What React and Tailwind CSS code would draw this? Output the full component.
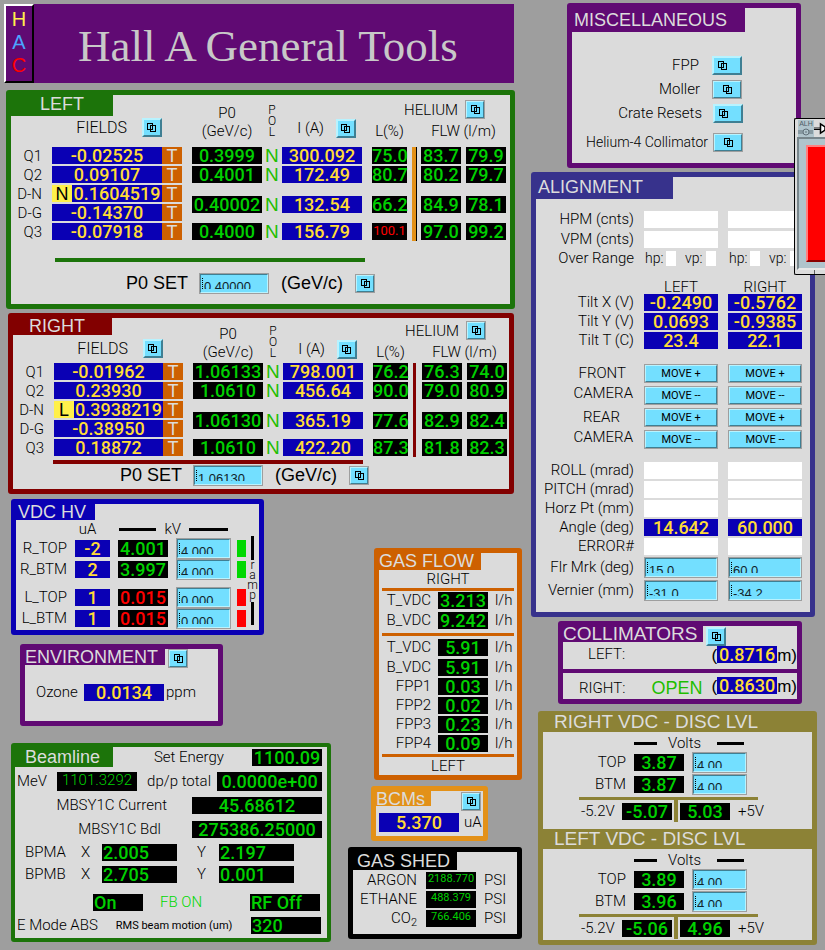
import React from "react";

const SANS = "font-['Liberation_Sans',Arial,sans-serif]";
const LABEL = "font-['Roboto',sans-serif] font-light text-black whitespace-nowrap";

/* ---------- small parts ---------- */

function RelatedIcon() {
  return (
    <svg width="9" height="9" viewBox="0 0 9 9" fill="none" stroke="#000" strokeWidth="1" shapeRendering="crispEdges" aria-hidden="true">
      <rect x="0.5" y="0.5" width="5" height="6" />
      <path d="M5.5 2.5H8.5V8.5H3.5V6.5M5.5 2.5H3.5V6.5" />
    </svg>
  );
}

const BEVEL =
  "border-2 border-t-[#b8f3ff] border-l-[#b8f3ff] border-r-[#3f7f93] border-b-[#3f7f93] bg-[#73dfff] text-black";

function RelatedButton({ label, wide, start, outlined }) {
  return (
    <button
      type="button"
      aria-label={label}
      className={`${BEVEL} flex shrink-0 items-center ${start ? "justify-start pl-1" : "justify-center"} ${
        wide ? "h-[19px] w-[30px]" : "h-[19px] w-5"
      } ${outlined ? "outline outline-1 -outline-offset-1 outline-[#9e9e9e]" : ""}`}
    >
      <RelatedIcon />
    </button>
  );
}

function Title({ children, size = "text-[18px]", className = "" }) {
  return <h2 className={`${SANS} whitespace-nowrap text-[#dcdcdc] ${size} ${className}`}>{children}</h2>;
}

function Panel({ className = "", children }) {
  return <section className={`rounded-[3px] border-[5px] bg-[#dbdbdb] ${className}`}>{children}</section>;
}

const VALUE = "block h-[17px] whitespace-nowrap font-['Roboto',sans-serif] font-medium text-[18px] leading-[18px]";

function Value({ tone = "blue", className = "text-center", children }) {
  const tones = {
    blue: "bg-[#0a00b4] text-[#ffdc37]",
    green: "bg-black text-[#00d000]",
    red: "bg-black text-[#ff0000]",
    white: "bg-white",
  };
  return <output className={`${VALUE} ${tones[tone]} ${className}`}>{children}</output>;
}

function Entry({ label, value, className = "" }) {
  return (
    <span
      className={`relative block h-[21px] shrink-0 border-2 border-b-[#b8f3ff] border-l-[#3f7f93] border-r-[#b8f3ff] border-t-[#3f7f93] bg-[#73dfff] outline outline-1 -outline-offset-1 outline-[#9e9e9e] ${className}`}
    >
      <span className="block h-[14px] overflow-hidden pt-[2px]">
        <input
          aria-label={label}
          defaultValue={value}
          className={`${SANS} block h-5 w-full bg-transparent pl-[3px] text-[13px] leading-5 text-[#10242b] outline-none`}
        />
      </span>
      <i className="absolute left-px top-[3px] h-[11px] border-l border-dotted border-black" />
    </span>
  );
}

/* ---------- spectrometer arm ---------- */

const ARM_ROWS = ["Q1", "Q2", "D-N", "D-G", "Q3"];

function Arm({ name, panel, tab, body, head, th, bar, rule, setRow, data }) {
  return (
    <Panel className={panel}>
      <Title className={tab}>{name}</Title>
      <div className={body}>
        <table className={`${head} w-full table-fixed border-separate border-spacing-0`}>
          <colgroup>
            <col className="w-[41px]" />
            <col />
            <col className="w-5" />
            <col className="w-20" />
            <col className="w-5" />
            <col className="w-20" />
            <col className="w-[45px]" />
            <col className="w-[14px]" />
            <col className="w-10" />
            <col className="w-[45px]" />
          </colgroup>
          <thead>
            <tr className="align-bottom">
              <th className={th} />
              <th scope="col" className={`${LABEL} ${th} text-[16px] leading-[19px]`}>
                <div className="flex items-center justify-end gap-[15px] pb-[3px]">
                  FIELDS
                  <RelatedButton label={`${name} fields`} />
                </div>
              </th>
              <th className={th} />
              <th scope="col" className={`${LABEL} ${th} pl-[10px] text-[15px] leading-[18px]`}>
                P0
                <br />
                (GeV/c)
              </th>
              <th scope="col" className={`${LABEL} ${th} text-[12px] leading-[11px]`}>
                <div className="pb-[2px]">
                  P<br />O<br />L
                </div>
              </th>
              <th scope="col" className={`${LABEL} ${th} text-[15px] leading-[19px]`}>
                <div className="flex items-center justify-end gap-3 pb-[2px] pr-1.5">
                  I (A)
                  <RelatedButton label={`${name} currents`} />
                </div>
              </th>
              <th scope="colgroup" colSpan={4} className={`${LABEL} ${th} text-[15px] leading-[18px]`}>
                <div className="flex items-center justify-end gap-[7px] pb-[3px] pr-[21px]">
                  HELIUM
                  <RelatedButton label={`${name} helium`} outlined />
                </div>
                <div className="flex pl-[10px]">
                  <span className="w-[35px]">L(%)</span>
                  <span className="grow pl-[14px]">FLW (l/m)</span>
                </div>
              </th>
            </tr>
          </thead>
          <tbody>
            {ARM_ROWS.map((row, i) => {
              const grp = data.groups[i];
              const span = i === 2 ? 2 : 1;
              const cell = span === 2 ? "align-middle" : "align-top";
              return (
                <tr key={row} className="h-[19px]">
                  <th scope="row" className={`${LABEL} pr-[10px] text-right align-top text-[15px] leading-[18px]`}>{row}</th>
                  <td className="align-top">
                    {i === 2 ? (
                      <div className="flex">
                        <b className={`${SANS} h-[17px] w-5 bg-[#fff04b] text-center text-[18px] font-normal leading-[18px]`}>
                          {data.flag}
                        </b>
                        <Value className="grow text-center">{data.fields[i]}</Value>
                      </div>
                    ) : (
                      <Value>{data.fields[i]}</Value>
                    )}
                  </td>
                  <td className="align-top">
                    <span className={`${SANS} block h-[17px] bg-[#cd6000] text-center text-[18px] leading-[18px] text-[#dcdcdc]`}>T</span>
                  </td>
                  {grp && (
                    <>
                      <td rowSpan={span} className={`${cell} pl-[10px]`}>
                        <Value tone="green">{grp[0]}</Value>
                      </td>
                      <td rowSpan={span} className={cell}>
                        <span className={`${SANS} block h-[17px] text-center text-[19px] leading-[18px] text-[#1fbe00]`}>N</span>
                      </td>
                      <td rowSpan={span} className={cell}>
                        <Value>{grp[1]}</Value>
                      </td>
                      <td rowSpan={span} className={`${cell} pl-[10px]`}>
                        {grp[5] ? (
                          <output className="block h-[17px] bg-black text-center font-['Roboto',sans-serif] text-[13px] font-normal leading-[15px] text-[#ff0000]">
                            {grp[2]}
                          </output>
                        ) : (
                          <Value tone="green">{grp[2]}</Value>
                        )}
                      </td>
                    </>
                  )}
                  {i === 0 && (
                    <td rowSpan={5} className="pl-[5px] align-top">
                      <div className={`h-[94px] ${bar}`} />
                    </td>
                  )}
                  {grp && (
                    <>
                      <td rowSpan={span} className={cell}>
                        <Value tone="green">{grp[3]}</Value>
                      </td>
                      <td rowSpan={span} className={`${cell} pl-[5px]`}>
                        <Value tone="green">{grp[4]}</Value>
                      </td>
                    </>
                  )}
                </tr>
              );
            })}
          </tbody>
        </table>
      </div>
      <div className={`h-1 ${rule}`} />
      <div className={`${SANS} flex items-center text-[18px] leading-[21px] ${setRow}`}>
        <span className="whitespace-nowrap">P0 SET</span>
        <Entry label={`${name} P0 set`} value={data.set} className="ml-[11px] w-[70px]" />
        <span className="ml-3 mr-3">(GeV/c)</span>
        <RelatedButton label={`${name} P0 set tools`} outlined />
      </div>
    </Panel>
  );
}

/* ---------- VDC HV ---------- */

function HvRow({ name, ua, kv, set, ok, className = "" }) {
  return (
    <div className={`flex items-center ${className}`}>
      <span className={`${LABEL} grow pr-2 text-right text-[15px] leading-[17px]`}>{name}</span>
      <Value className="w-[35px] text-center">{ua}</Value>
      <Value tone={ok ? "green" : "red"} className="ml-2 w-[50px] text-center">{kv}</Value>
      <Entry label={`${name} set`} value={set} className="ml-2 w-[55px]" />
      <span className={`ml-[6px] h-[17px] w-[9px] ${ok ? "bg-[#00d800]" : "bg-[#ff0000]"}`} />
    </div>
  );
}

function VdcHv() {
  return (
    <Panel className="ml-[11px] mr-[78px] mt-[5px] border-[#0a00b4] pb-px">
      <Title className="h-4 w-[79px] bg-[#0a00b4] pl-[2px] leading-[17px]">VDC HV</Title>
      <div className="flex">
        <div className="grow">
          <div className={`${LABEL} flex h-[18px] items-center pr-[18px] text-[15px] leading-5`}>
            <span className="grow pr-[23px] text-right">uA</span>
            <i className="h-[3px] w-[37px] bg-black" />
            <span className="px-2">kV</span>
            <i className="h-[3px] w-[39px] bg-black" />
          </div>
          <HvRow name="R_TOP" ua="-2" kv="4.001" set="4.000" ok />
          <HvRow name="R_BTM" ua="2" kv="3.997" set="4.000" ok />
          <HvRow name="L_TOP" ua="1" kv="0.015" set="0.000" className="mt-[7px]" />
          <HvRow name="L_BTM" ua="1" kv="0.015" set="0.000" />
        </div>
        <div className={`${LABEL} flex w-[13px] flex-col items-center pb-1 pt-4 text-center text-[12px] leading-[10px]`}>
          <i className="w-[3px] grow bg-black" />
          <span className="pb-0.5">
            r<br />a<br />m<br />p
          </span>
          <i className="w-[3px] grow bg-black" />
        </div>
      </div>
    </Panel>
  );
}

function Environment() {
  return (
    <Panel className="ml-5 mr-[119px] mt-[9px] border-[#600a73] pb-5">
      <div className="flex">
        <Title className="h-4 w-[140px] bg-[#600a73] leading-[17px]">ENVIRONMENT</Title>
        <div className="ml-[3px] h-[19px]">
          <RelatedButton label="Environment" outlined />
        </div>
      </div>
      <div className={`${LABEL} mt-4 flex items-center pl-[11px] text-[15px] leading-[17px]`}>
        <span className="w-12">Ozone</span>
        <Value className="w-20 text-center">0.0134</Value>
        <span className="ml-[2px]">ppm</span>
      </div>
    </Panel>
  );
}

/* ---------- Beamline ---------- */

function Beamline() {
  const text = `${LABEL} text-[15px] leading-[17px]`;
  return (
    <section className="ml-[11px] mr-[11px] mt-[17px] rounded-[3px] border-4 border-[#1c740a] bg-[#dbdbdb] pb-1">
      <div className="flex">
        <Title className="h-5 w-[98px] bg-[#1c740a] pl-[10px] leading-[20px]">Beamline</Title>
        <div className={`${text} flex grow items-center justify-end pr-[5px] pt-px`}>
          <span className="mr-7">Set Energy</span>
          <Value tone="green" className="w-[70px] text-center">1100.09</Value>
        </div>
      </div>
      <div className={`${text} mt-[5px] flex items-center pl-[2px] pr-[5px]`}>
        <span>MeV</span>
        <output className="ml-[10px] h-[19px] w-20 bg-black text-center text-[15px] font-light leading-[17px] text-[#00d000]">
          1101.3292
        </output>
        <span className="grow pr-[6px] text-right">dp/p total</span>
        <Value tone="green" className="h-[19px]! w-[105px] text-center leading-[20px]!">0.0000e+00</Value>
      </div>
      <div className={`${text} mt-[6px] flex items-center pr-[5px]`}>
        <span className="grow pr-[25px] text-right">MBSY1C Current</span>
        <Value tone="green" className="w-[130px] text-center">45.68612</Value>
      </div>
      <div className={`${text} mt-[7px] flex items-center pr-[5px]`}>
        <span className="grow pr-[31px] text-right">MBSY1C Bdl</span>
        <Value tone="green" className="w-[130px] text-center">275386.25000</Value>
      </div>
      <div className="mt-[6px] flex flex-col gap-[5px]">
        {[
          ["BPMA", "2.005", "2.197"],
          ["BPMB", "2.705", "0.001"],
        ].map(([n, x, y]) => (
          <div key={n} className={`${text} flex items-center pl-[10px]`}>
            <span className="w-14">{n}</span>
            <span className="w-[21px]">X</span>
            <Value tone="green" className="w-[75px] pl-px">{x}</Value>
            <span className="w-[42px] pl-5">Y</span>
            <Value tone="green" className="w-[75px] pl-px">{y}</Value>
          </div>
        ))}
      </div>
      <div className={`${text} mt-[11px] flex items-center pl-[78px] pr-[7px]`}>
        <Value tone="green" className="w-[50px] pl-px">On</Value>
        <span className="ml-[17px] grow text-[#00d800]!">FB ON</span>
        <Value tone="green" className="w-[70px] pl-px">RF Off</Value>
      </div>
      <div className={`${text} mt-[6px] flex items-center pl-[2px] pr-[6px]`}>
        <span>E Mode ABS</span>
        <span className="ml-[18px] grow text-[11px] font-normal">RMS beam motion (um)</span>
        <Value tone="green" className="w-[70px] pl-px">320</Value>
      </div>
    </section>
  );
}

/* ---------- Gas ---------- */

function GasRow({ name, value, className = "" }) {
  return (
    <div className={`${LABEL} flex items-center text-[15px] leading-[17px] ${className}`}>
      <span className="grow pr-[7px] text-right">{name}</span>
      <Value tone="green" className="w-[50px] text-center">{value}</Value>
      <span className="w-[29px] pl-[7px]">l/h</span>
    </div>
  );
}

function GasFlow() {
  return (
    <Panel className="mt-[54px] border-[#cd6000]">
      <Title className="h-[17px] w-[102px] bg-[#cd6000] leading-[17px]">GAS FLOW</Title>
      <p className={`${LABEL} text-center text-[15px] leading-[18px]`}>RIGHT</p>
      <div className="mx-[3px] h-[3px] bg-[#cd6000]" />
      <GasRow name="T_VDC" value="3.213" className="mt-px" />
      <GasRow name="B_VDC" value="9.242" className="mt-[3px]" />
      <div className="mx-[3px] mt-1 h-[3px] bg-[#cd6000]" />
      <GasRow name="T_VDC" value="5.91" className="mt-[3px]" />
      <GasRow name="B_VDC" value="5.91" className="mt-[3px]" />
      <GasRow name="FPP1" value="0.03" className="mt-[2px]" />
      <GasRow name="FPP2" value="0.02" className="mt-[2px]" />
      <GasRow name="FPP3" value="0.23" className="mt-[2px]" />
      <GasRow name="FPP4" value="0.09" className="mt-[2px]" />
      <div className="mx-[3px] mt-[2px] h-[3px] bg-[#cd6000]" />
      <p className={`${LABEL} text-center text-[15px] leading-[18px]`}>LEFT</p>
    </Panel>
  );
}

function Bcms() {
  return (
    <Panel className="-ml-[3px] mr-[34px] mt-[6px] border-[#e39118] pb-1">
      <div className="flex h-[22px] justify-between pr-[2px]">
        <Title className="h-[15px] w-[55px] bg-[#e39118] leading-[16px]">BCMs</Title>
        <div className="pt-px">
          <RelatedButton label="BCMs" outlined />
        </div>
      </div>
      <div className={`${LABEL} flex items-center pl-[3px] text-[15px] leading-[19px]`}>
        <Value className="h-[19px]! w-20 text-center leading-[20px]!">5.370</Value>
        <span className="ml-[5px]">uA</span>
      </div>
    </Panel>
  );
}

function GasShed() {
  return (
    <Panel className="-ml-[26px] mt-[6px] border-black pb-[7px]">
      <Title className="h-[18px] w-[104px] bg-black pl-1 leading-[19px]">GAS SHED</Title>
      <div className="mt-[2px] flex flex-col gap-[2px]">
        {[
          ["ARGON", "2188.770"],
          ["ETHANE", "488.379"],
          ["CO₂", "766.406"],
        ].map(([n, v]) => (
          <div key={n} className={`${LABEL} flex h-[17px] items-center text-[15px] leading-[17px]`}>
            <span className="grow pr-[9px] text-right">
              {n === "CO₂" ? (
                <>
                  CO<sub className="text-[11px] leading-none">2</sub>
                </>
              ) : (
                n
              )}
            </span>
            <output className="h-[17px] w-[50px] bg-black text-center text-[11px] font-normal leading-[13px] text-[#00d000]">{v}</output>
            <span className="w-[41px] pl-2">PSI</span>
          </div>
        ))}
      </div>
    </Panel>
  );
}

/* ---------- right side ---------- */

function Misc() {
  const rows = [
    ["FPP", true, "pr-[54px]", "pl-[13px]"],
    ["Moller", false, "pr-[54px]", "pl-3"],
    ["Crate Resets", true, "pr-[53px]", "pl-[11px]"],
    ["Helium-4 Collimator", false, "pr-[53px]", "pl-[5px]"],
  ];
  return (
    <Panel className="ml-9 mr-6 border-[#600a73] pb-[11px]">
      <Title className="h-6 w-[173px] bg-[#600a73] pl-[2px] leading-6">MISCELLANEOUS</Title>
      <div className="mt-6 flex flex-col gap-[5px]">
        {rows.map(([n, start, pr, pl], i) => (
          <div
            key={n}
            className={`${LABEL} flex items-center justify-end leading-[19px] ${pr} ${i === 3 ? "mt-[5px] text-[14px]" : "text-[15px]"}`}
          >
            <span>{n}</span>
            <span className={pl}>
              <RelatedButton label={n} wide start={start} outlined={!start} />
            </span>
          </div>
        ))}
      </div>
    </Panel>
  );
}

function AlignRow({ label, left, right, blue }) {
  return (
    <>
      <span className="text-right">{label}</span>
      <Value tone={blue ? "blue" : "white"}>{left}</Value>
      <Value tone={blue ? "blue" : "white"}>{right}</Value>
    </>
  );
}

function MoveButton({ children, label }) {
  return (
    <button
      type="button"
      aria-label={label}
      className={`${BEVEL} h-[19px] outline outline-1 -outline-offset-1 outline-[#9e9e9e] font-['Roboto',sans-serif] text-[11px] font-normal leading-[15px]`}
    >
      {children}
    </button>
  );
}

function OverRange() {
  return (
    <div className="flex items-center pl-px text-[14px]">
      <span className="w-[21px]">hp:</span>
      <output className="h-[15px] w-[10px] bg-white" />
      <span className="w-[30px] pl-[9px]">vp:</span>
      <output className="h-[15px] w-[10px] bg-white" />
    </div>
  );
}

function Alignment() {
  const grid = `${LABEL} grid grid-cols-[minmax(0,1fr)_74px_74px] items-center gap-x-[10px] pr-2 text-[15px]`;
  return (
    <Panel className="mr-[10px] mt-1 border-[#37328c] pb-[11px]">
      <Title className="h-[22px] w-[137px] bg-[#37328c] pl-[2px] leading-[20px]">ALIGNMENT</Title>
      <div className={`${grid} mt-3 gap-y-[3px] leading-[17px]`}>
        <AlignRow label="HPM (cnts)" />
        <AlignRow label="VPM (cnts)" />
      </div>
      <div className={`${grid} mt-px leading-[18px]`}>
        <span className="text-right">Over Range</span>
        <OverRange />
        <OverRange />
      </div>
      <div className={`${grid} mt-[13px] leading-[14px]`}>
        <span />
        <span className="text-center">LEFT</span>
        <span className="text-center">RIGHT</span>
      </div>
      <div className={`${grid} gap-y-[2px] leading-[17px]`}>
        <AlignRow blue label="Tilt X (V)" left="-0.2490" right="-0.5762" />
        <AlignRow blue label="Tilt Y (V)" left="0.0693" right="-0.9385" />
        <AlignRow blue label="Tilt T (C)" left="23.4" right="22.1" />
      </div>
      <div className={`${grid} mt-[15px] gap-y-[3px] leading-[17px]`}>
        <span className="pr-2 text-right">FRONT</span>
        <MoveButton label="Front camera left +">MOVE +</MoveButton>
        <MoveButton label="Front camera right +">MOVE +</MoveButton>
        <span className="self-start pr-px text-right leading-[15px]">CAMERA</span>
        <MoveButton label="Front camera left -">MOVE --</MoveButton>
        <MoveButton label="Front camera right -">MOVE --</MoveButton>
        <span className="pr-[14px] text-right">REAR</span>
        <MoveButton label="Rear camera left +">MOVE +</MoveButton>
        <MoveButton label="Rear camera right +">MOVE +</MoveButton>
        <span className="self-start pr-px text-right leading-[15px]">CAMERA</span>
        <MoveButton label="Rear camera left -">MOVE --</MoveButton>
        <MoveButton label="Rear camera right -">MOVE --</MoveButton>
      </div>
      <div className={`${grid} mt-[13px] gap-y-[2px] leading-[17px]`}>
        <AlignRow label="ROLL (mrad)" />
        <AlignRow label="PITCH (mrad)" />
        <AlignRow label="Horz Pt (mm)" />
        <AlignRow blue label="Angle (deg)" left="14.642" right="60.000" />
        <AlignRow label="ERROR#" />
        <span className="text-right">Flr Mrk (deg)</span>
        <Entry label="Left floor mark" value="15.0" />
        <Entry label="Right floor mark" value="60.0" />
        <span className="text-right">Vernier (mm)</span>
        <Entry label="Left vernier" value="-31.0" />
        <Entry label="Right vernier" value="-34.2" />
      </div>
    </Panel>
  );
}

function Collimators() {
  const metres = `${SANS} font-normal text-[17px] leading-[20px]`;
  return (
    <Panel className="ml-[27px] mr-[23px] mt-1 border-[#600a73]">
      <div className="flex h-5">
        <Title size="text-[19px]" className="h-4 w-[140px] bg-[#600a73] leading-[16px]">COLLIMATORS</Title>
        <div className="ml-[3px] pt-px">
          <RelatedButton label="Collimators" />
        </div>
      </div>
      <div className={`${LABEL} flex h-[23px] items-start text-[15px]`}>
        <span className="grow pl-[25px] leading-[17px]">LEFT:</span>
        <span className={metres}>(</span>
        <Value className="w-[60px] text-center">0.8716</Value>
        <span className={metres}>m)</span>
      </div>
      <div className="h-1 bg-[#600a73]" />
      <div className={`${LABEL} flex h-[26px] items-start pt-1 text-[15px]`}>
        <span className="grow pl-4 leading-[23px]">RIGHT:</span>
        <span className={`${SANS} mr-[9px] text-[18px] font-normal leading-[22px] text-[#1fbe00]`}>OPEN</span>
        <span className={metres}>(</span>
        <Value className="w-[60px] text-center">0.8630</Value>
        <span className={metres}>m)</span>
      </div>
    </Panel>
  );
}

function Disc({ name, top, bottom, neg, pos, height }) {
  const text = `${LABEL} text-[15px] leading-[17px]`;
  return (
    <div className="bg-[#8c8236]">
      <Title size="text-[19px]" className="h-5 pl-[11px] leading-5">{name} VDC - DISC LVL</Title>
      <div className={`bg-[#dbdbdb] pl-9 pt-[3px] ${height}`}>
        <div className={`${text} flex items-center pl-[55px]`}>
          <i className="h-[3px] w-[23px] bg-black" />
          <span className="pl-[11px] pr-4">Volts</span>
          <i className="h-[3px] w-[27px] bg-black" />
        </div>
        {[
          ["TOP", top],
          ["BTM", bottom],
        ].map(([n, v]) => (
          <div key={n} className={`${text} mb-px flex items-center`}>
            <span className="w-[55px] pr-2 text-right">{n}</span>
            <Value tone="green" className="w-[50px] text-center">{v}</Value>
            <Entry label={`${name} ${n} level`} value="4.00" className="ml-2 w-[55px]" />
          </div>
        ))}
        <div className="mt-[2px] h-[3px] w-[179px] bg-[#8c8236]" />
        <div className={`${text} flex items-center`}>
          <span className="w-[43px] pl-[2px]">-5.2V</span>
          <Value tone="green" className="w-[50px] text-center">{neg}</Value>
          <i className="mx-[2px] h-[22px] w-1 bg-[#8c8236]" />
          <Value tone="green" className="w-[50px] text-center">{pos}</Value>
          <span className="pl-2">+5V</span>
        </div>
      </div>
    </div>
  );
}

/* ---------- alarm handler window peeking in from the right ---------- */

function AlarmWindow() {
  return (
    <aside
      aria-label="Alarm handler"
      className="absolute right-0 top-[118px] h-[157px] w-[31px] overflow-hidden rounded-l-[2px] border border-r-0 border-black bg-[#dcdcdc]"
    >
      <div className="flex h-[18px] items-center pl-[3px]">
        <div className="h-[17px] w-4 shrink-0 bg-[#b0c4cc] text-center">
          <p className="font-['Liberation_Sans',Arial,sans-serif] text-[7px] leading-[8px] text-[#506068]">ALH</p>
          <svg width="16" height="8" viewBox="0 0 16 8" fill="none" stroke="#607078" strokeWidth="1" aria-hidden="true">
            <circle cx="8" cy="4" r="3" />
            <path d="M0 2v4M2 2v4M4 2v4M12 2v4M14 2v4M7 4h2" />
          </svg>
        </div>
        <svg className="shrink-0" width="11" height="14" viewBox="0 0 11 14" aria-hidden="true">
          <path d="M0 7.500H6" stroke="#000" strokeWidth="3" />
          <path d="M0 7H6" stroke="#fff" strokeWidth="1" />
          <path d="M6.500 3V12L11 9V6Z" fill="#fff" stroke="#000" strokeWidth="1.500" />
        </svg>
      </div>
      <div className="ml-[2px] h-[133px] border-b-2 border-l-2 border-t-2 border-b-[#e8e8e8] border-l-[#78868c] border-t-[#78868c] bg-[#b0c4cc] pl-[7px] pt-[6px]">
        <div className="h-[117px] border-b-2 border-l-2 border-t-2 border-b-[#8b0000] border-l-[#ff8080] border-t-[#ff8080] bg-[#ff0000]" />
      </div>
      <div className="flex h-[5px]">
        <i className="w-5 border-r border-[#606060]" />
      </div>
    </aside>
  );
}

/* ---------- page ---------- */

const LEFT_DATA = {
  flag: "N",
  set: "0.40000",
  fields: ["-0.02525", "0.09107", "0.1604519", "-0.14370", "-0.07918"],
  groups: [
    ["0.3999", "300.092", "75.0", "83.7", "79.9"],
    ["0.4001", "172.49", "80.7", "80.2", "79.7"],
    ["0.40002", "132.54", "66.2", "84.9", "78.1"],
    null,
    ["0.4000", "156.79", "100.1", "97.0", "99.2", true],
  ],
};

const RIGHT_DATA = {
  flag: "L",
  set: "1.06130",
  fields: ["-0.01962", "0.23930", "0.3938219", "-0.38950", "0.18872"],
  groups: [
    ["1.06133", "798.001", "76.2", "76.3", "74.0"],
    ["1.0610", "456.64", "90.0", "79.0", "80.9"],
    ["1.06130", "365.19", "77.6", "82.9", "82.4"],
    null,
    ["1.0610", "422.20", "87.3", "81.8", "82.3"],
  ],
};

export default function App() {
  return (
    <div className="relative flex min-h-screen items-start overflow-hidden bg-[#9e9e9e]">
      <main className="min-w-0 flex-[523_1_0%] pt-1">
        <header className="ml-1 mr-[9px] flex h-[79px] bg-[#600a73]">
          <div
            className={`${SANS} flex w-[30px] shrink-0 flex-col items-center border-2 border-b-black border-l-white border-r-black border-t-white pt-[2px] text-[20px] leading-[23px]`}
          >
            <span className="text-[#fff04b]">H</span>
            <span className="text-[#4ba5ff]">A</span>
            <span className="text-[#ff0000]">C</span>
          </div>
          <h1 className="grow whitespace-nowrap pl-11 font-['Liberation_Serif','Times_New_Roman',serif] text-[45px] leading-[84px] text-[#c8c8c8]">
            Hall A General Tools
          </h1>
        </header>

        <Arm
          name="LEFT"
          data={LEFT_DATA}
          panel="ml-[6px] mr-[8px] mt-[7px] border-[#1c740a] pb-[10px]"
          tab="h-[21px] w-[102px] bg-[#1c740a] pl-[29px] leading-[19px]"
          body="pr-1"
          head="-mt-[17px]"
          th="h-[48px] pb-[7px]"
          bar="w-1 bg-[#e39118] shadow-[1px_0_0_black]"
          rule="ml-11 mr-[145px] mt-4 bg-[#1c740a]"
          setRow="mt-[11px] pl-[115px]"
        />
        <Arm
          name="RIGHT"
          data={RIGHT_DATA}
          panel="ml-2 mr-[9px] mt-1 border-[#820000] pb-[3px]"
          tab="h-[17px] w-[99px] bg-[#820000] pl-4 leading-[16px]"
          body="pr-[2px]"
          head="-mt-4"
          th="h-[44px] pb-[2px]"
          bar="w-[3px] bg-[#820000]"
          rule="ml-10 mr-[146px] mt-[2px] bg-[#820000]"
          setRow="mt-px pl-[107px]"
        />

        <div className="flex items-start">
          <div className="min-w-0 flex-[342_1_0%]">
            <VdcHv />
            <Environment />
            <Beamline />
          </div>
          <div className="ml-8 mr-px w-[148px] shrink-0">
            <GasFlow />
            <Bcms />
            <GasShed />
          </div>
        </div>
      </main>

      <div className="min-w-0 flex-[294_1_0%] pl-2 pt-[3px]">
        <Misc />
        <Alignment />
        <Collimators />
        <div className="ml-[7px] mr-2 mt-[7px] rounded-[3px] border-[5px] border-t border-[#8c8236]">
          <Disc name="RIGHT" top="3.87" bottom="3.87" neg="-5.07" pos="5.03" height="h-[97px]" />
          <Disc name="LEFT" top="3.89" bottom="3.96" neg="-5.06" pos="4.96" height="h-[91px]" />
        </div>
      </div>

      <AlarmWindow />
    </div>
  );
}
